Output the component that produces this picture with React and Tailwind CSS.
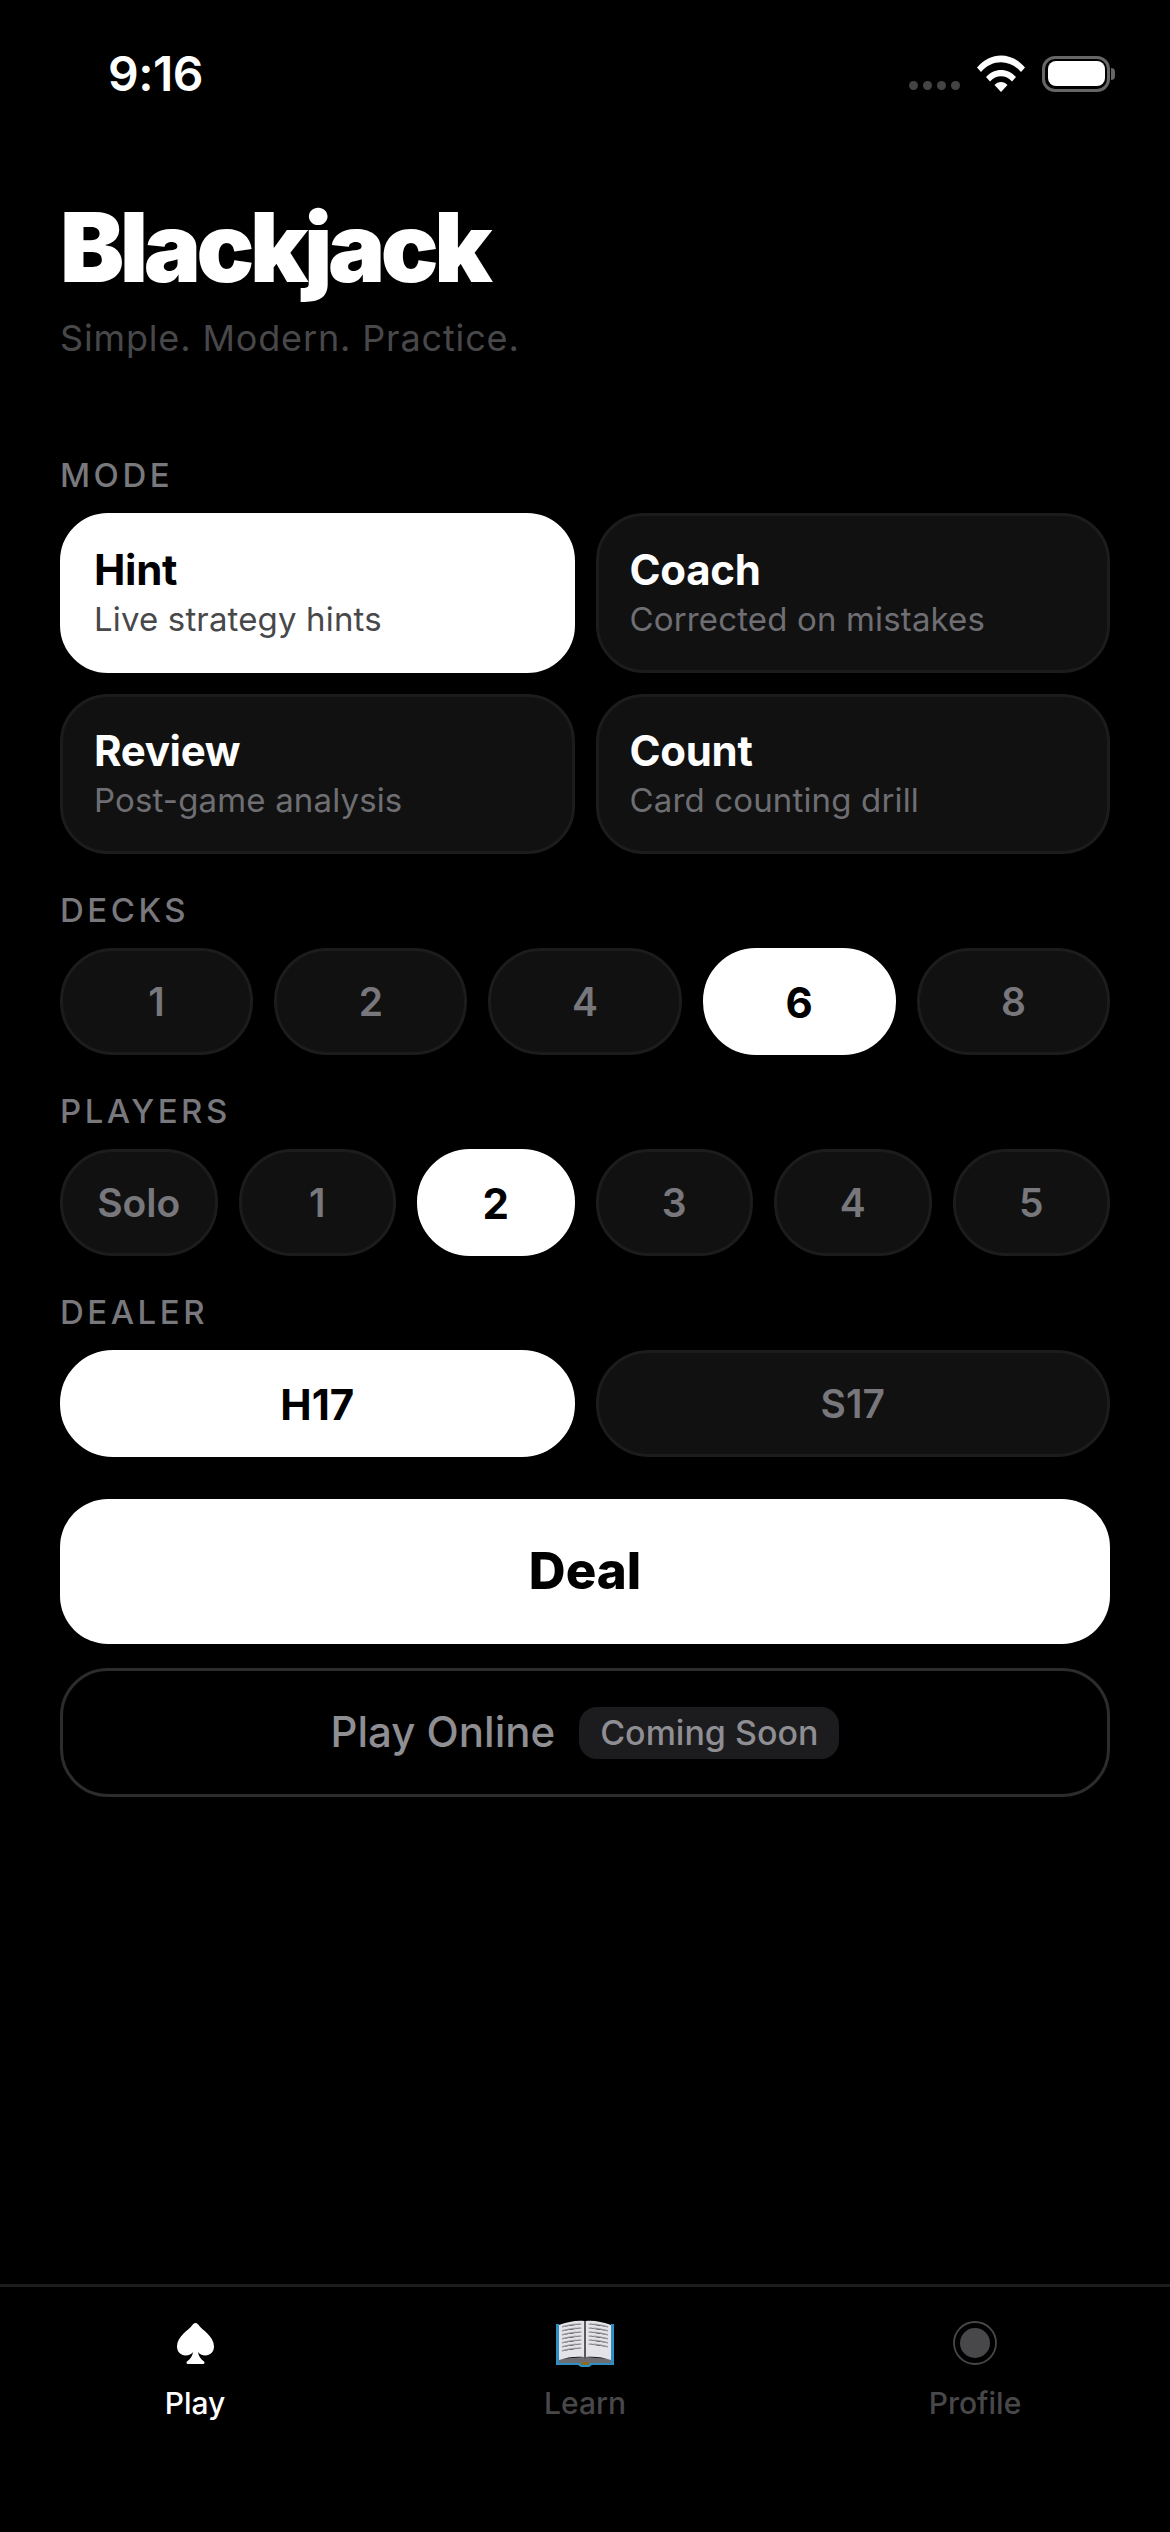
const modes = [
  { title: "Hint", sub: "Live strategy hints", active: true },
  { title: "Coach", sub: "Corrected on mistakes" },
  { title: "Review", sub: "Post-game analysis" },
  { title: "Count", sub: "Card counting drill" },
];

function Label({ children, className = "" }) {
  return (
    <div className={`h-10 mb-[18px] pt-[2px] flex items-center text-[33px] font-medium tracking-[3.5px] text-[#78787d] ${className}`}>
      {children}
    </div>
  );
}

function Pill({ label, active }) {
  return (
    <button
      className={`h-[107px] min-w-0 flex-1 basis-0 rounded-[53px] border-[3px] pt-[2px] ${
        active
          ? "border-white bg-white text-[42px] font-bold text-black"
          : "border-[#1c1c1e] bg-[#111111] text-[39px] font-semibold text-[#77777c]"
      }`}
    >
      {label}
    </button>
  );
}

function SpadeIcon() {
  return (
    <svg width="37" height="41" viewBox="0 0 37 41">
      <path
        d="M18.5 0C20 0 21 1 22 2.500C25 7 37 13 37 23.500C37 29 33 32.500 28.500 32.500C25 32.500 22.500 31 21 29C21.500 33 23.500 36 27 38.500C28 39.500 27.500 41 26 41H11C9.500 41 9 39.500 10 38.500C13.500 36 15.500 33 16 29C14.500 31 12 32.500 8.500 32.500C4 32.500 0 29 0 23.500C0 13 12 7 15 2.500C16 1 17 0 18.500 0Z"
        fill="#fff"
      />
    </svg>
  );
}

function BookIcon() {
  return (
    <svg width="58" height="47" viewBox="0 0 58 47">
      <path d="M0 4H3V41L26 43H32L55 41V4H58V45H36L33 47H25L22 45H0Z" fill="#2f8fc4" />
      <path d="M3 39L27 37H31L55 39V43H3Z" fill="#6e6e72" />
      <path d="M3 5C11 2 21 0 28 1V37C21 36 11 37 3 40Z" fill="#e4e4e8" />
      <path d="M55 5C47 2 37 0 30 1V37C37 36 47 37 55 40Z" fill="#e4e4e8" />
      <rect x="28" y="1" width="2" height="38" fill="#5a5a5e" />
      <g stroke="#96969c" strokeWidth="1.400" strokeDasharray="5 1 3 1">
        <path d="M6 7C12 5 19 4 26 4" />
        <path d="M6 11C12 9 19 8 26 8" />
        <path d="M6 15C12 13 19 12 26 12" />
        <path d="M6 19C12 17 19 16 26 16" />
        <path d="M6 23C12 21 19 20 26 20" />
        <path d="M6 27C12 25 19 24 26 24" />
        <path d="M6 31C12 29 19 28 26 28" />
        <path d="M52 7C46 5 39 4 32 4" />
        <path d="M52 11C46 9 39 8 32 8" />
        <path d="M52 15C46 13 39 12 32 12" />
        <path d="M52 19C46 17 39 16 32 16" />
        <path d="M52 23C46 21 39 20 32 20" />
        <path d="M52 27C46 25 39 24 32 24" />
      </g>
      <rect x="25" y="42" width="8" height="3" fill="#8a6d1f" />
    </svg>
  );
}

function ProfileIcon() {
  return (
    <svg width="44" height="44" viewBox="0 0 44 44">
      <circle cx="22" cy="22" r="21" fill="none" stroke="#48484a" strokeWidth="1.800" />
      <circle cx="22" cy="22" r="15" fill="#48484a" />
    </svg>
  );
}

function StatusBar() {
  return (
    <div className="h-[146px] shrink-0 flex items-center justify-between pl-[108px] pr-[55px]">
      <span className="text-[48px] font-semibold text-white tracking-[-0.5px] mt-[2px]">9:16</span>
      <div className="flex items-end gap-[17px]">
        <div className="flex gap-[5px] mb-0.5">
          {[0, 1, 2, 3].map((i) => (
            <span key={i} className="size-[9px] rounded-full bg-[#444444]" />
          ))}
        </div>
        <svg width="48" height="37" viewBox="0 0 48 37">
          <path d="M0 12.500C13.500 -3.500 34.500 -3.500 48 12.500L44 17C33 4 15 4 4 17Z" fill="#fff" />
          <path d="M9 22C17 12.500 31 12.500 39 22L35 26.500C29 19.500 19 19.500 13 26.500Z" fill="#fff" />
          <path d="M17.500 30C21 26 27 26 30.500 30L24 37Z" fill="#fff" />
        </svg>
        <div className="flex items-center gap-px">
          <div className="w-[68px] h-9 rounded-[13px] border-[3.5px] border-[#666666] p-[2.5px]">
            <div className="h-full rounded-[8px] bg-white" />
          </div>
          <div className="w-[4px] h-3 rounded-r-full bg-[#666666]" />
        </div>
      </div>
    </div>
  );
}

export default function App() {
  return (
    <div className="w-[1170px] h-[2532px] flex flex-col bg-black font-['Inter',sans-serif]">
      <StatusBar />
      <main className="flex-1 px-[60px]">
        <h1 className="mt-[46px] text-[96px] leading-[110px] font-black tracking-[-4.4px] text-white">Blackjack</h1>
        <p className="mt-[11px] h-[50px] text-[36px] leading-[50px] tracking-[0.85px] text-[#48484a]">Simple. Modern. Practice.</p>

        <Label className="mt-[92px]">MODE</Label>
        <div className="grid grid-cols-2 gap-[21px]">
          {modes.map((m) => (
            <div
              key={m.title}
              className={`h-[160px] rounded-[48px] border-[3px] px-[31px] flex flex-col justify-center ${
                m.active ? "border-white bg-white" : "border-[#1c1c1e] bg-[#111111]"
              }`}
            >
              <div className={`text-[42px] leading-[52px] font-bold tracking-[-0.3px] ${m.active ? "text-black" : "text-white"}`}>{m.title}</div>
              <div className={`text-[33px] leading-[46px] tracking-[0.15px] ${m.active ? "text-[#48484a]" : "text-[#6e6e73]"}`}>{m.sub}</div>
            </div>
          ))}
        </div>

        <Label className="mt-9">DECKS</Label>
        <div className="flex gap-[21px]">
          {["1", "2", "4", "6", "8"].map((d) => (
            <Pill key={d} label={d} active={d === "6"} />
          ))}
        </div>

        <Label className="mt-9">PLAYERS</Label>
        <div className="flex gap-[21px]">
          {["Solo", "1", "2", "3", "4", "5"].map((p) => (
            <Pill key={p} label={p} active={p === "2"} />
          ))}
        </div>

        <Label className="mt-9">DEALER</Label>
        <div className="flex gap-[21px]">
          <Pill label="H17" active />
          <Pill label="S17" />
        </div>

        <button className="mt-[42px] h-[145px] w-full rounded-[48px] bg-white text-[51px] font-extrabold text-black">Deal</button>
        <button className="mt-6 h-[129px] w-full rounded-[48px] border-[3px] border-[#2c2c2e] flex items-center justify-center gap-[24px]">
          <span className="text-[42px] font-medium text-[#8e8e93] -mt-[2px]">Play Online</span>
          <span className="h-[52px] px-[21px] rounded-[18px] bg-[#1c1c1e] flex items-center text-[34px] font-medium text-[#8e8e93]">Coming Soon</span>
        </button>
      </main>

      <nav className="h-[248px] shrink-0 border-t-[3px] border-[#1c1c1e] grid grid-cols-3 pt-[32px]">
        <div className="flex flex-col items-center">
          <div className="h-12 flex items-center"><SpadeIcon /></div>
          <span className="mt-[14px] text-[30px] font-medium text-white">Play</span>
        </div>
        <div className="flex flex-col items-center">
          <div className="h-12 flex items-center"><BookIcon /></div>
          <span className="mt-[14px] text-[30px] font-medium text-[#48484a]">Learn</span>
        </div>
        <div className="flex flex-col items-center">
          <div className="h-12 flex items-center"><ProfileIcon /></div>
          <span className="mt-[14px] text-[30px] font-medium text-[#48484a]">Profile</span>
        </div>
      </nav>
    </div>
  );
}
